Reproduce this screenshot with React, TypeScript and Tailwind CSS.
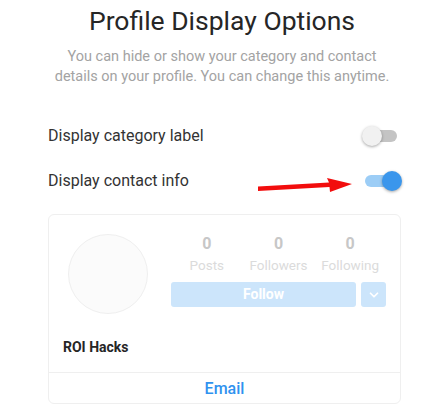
import { ChevronDown } from "lucide-react";

function Switch({ on }: { on: boolean }) {
  return (
    <div className="relative w-[40px] h-[20px] shrink-0">
      <div
        className={
          on
            ? "absolute left-[3px] right-[3px] top-[4px] h-[12px] rounded-full bg-[#9ccdf6]"
            : "absolute left-[3px] right-[5px] top-[4px] h-[12px] rounded-full bg-[#c4c4c4]"
        }
      />
      <div
        className={
          on
            ? "absolute top-0 right-0 w-[20px] h-[20px] rounded-full bg-[#3a96ec] shadow-[0_1px_3px_rgba(0,0,0,0.35)]"
            : "absolute top-0 left-0 w-[20px] h-[20px] rounded-full bg-[#f1f1f1] shadow-[0_1px_3px_rgba(0,0,0,0.35)]"
        }
      />
    </div>
  );
}

function Stat({ value, label }: { value: string; label: string }) {
  return (
    <div className="flex-1 flex flex-col items-center">
      <span className="text-[16px] leading-[20px] font-bold text-[#c7c7c7]">{value}</span>
      <span className="mt-[2px] text-[13.5px] leading-[18px] text-[#dbdbdb]">{label}</span>
    </div>
  );
}

export default function App() {
  return (
    <div className="relative w-[444px] h-[405px] overflow-hidden bg-white font-['Roboto',sans-serif]">
      {/* Header */}
      <h1 className="pt-[5px] text-center text-[26.5px] leading-[32px] font-normal text-[#262626]">
        Profile Display Options
      </h1>
      <p className="mt-[10px] text-center text-[14.5px] leading-[20px] text-[#a3a3a3]">
        You can hide or show your category and contact
        <br />
        details on your profile. You can change this anytime.
      </p>

      {/* Toggles */}
      <div className="mt-[26px]">
        <div className="h-[45px] flex items-center justify-between pl-[48px] pr-[42px]">
          <span className="text-[16px] text-[#333333]">Display category label</span>
          <Switch on={false} />
        </div>
        <div className="h-[45px] flex items-center justify-between pl-[48px] pr-[42px]">
          <span className="text-[16px] text-[#333333]">Display contact info</span>
          <Switch on={true} />
        </div>
      </div>

      {/* Preview card */}
      <div className="mt-[11px] ml-[48px] w-[353px] h-[190px] border border-[#efefef] rounded-[6px] flex flex-col">
        <div className="flex pt-[19px] pl-[19px] pr-[14px]">
          <div className="w-[80px] h-[80px] rounded-full border border-[#efefef] bg-[#fbfbfb] shrink-0" />
          <div className="ml-[23px] flex-1 flex flex-col">
            <div className="flex">
              <Stat value="0" label="Posts" />
              <Stat value="0" label="Followers" />
              <Stat value="0" label="Following" />
            </div>
            <div className="mt-[8px] flex gap-[5px]">
              <div className="flex-1 h-[25px] rounded-[3px] bg-[#cce5fb] flex items-center justify-center text-[14px] font-bold text-white">
                Follow
              </div>
              <div className="w-[25px] h-[25px] rounded-[3px] bg-[#cce5fb] flex items-center justify-center text-white">
                <ChevronDown size={14} strokeWidth={3} />
              </div>
            </div>
          </div>
        </div>
        <div className="mt-[24px] pl-[14px] text-[14px] leading-[18px] font-bold text-[#262626]">
          ROI Hacks
        </div>
        <div className="mt-auto h-[31px] pt-[2px] border-t border-[#efefef] flex items-center justify-center text-[16px] font-medium text-[#2f92ef]">
          Email
        </div>
      </div>

      {/* Annotation arrow */}
      <svg
        className="absolute left-0 top-0 pointer-events-none"
        width="444"
        height="405"
        viewBox="0 0 444 405"
      >
        <path d="M258 186.5 L329 182.5 L327 178 L352 184 L330 192 L329.5 187 L258 191 Z" fill="#f20d0d" />
      </svg>
    </div>
  );
}
